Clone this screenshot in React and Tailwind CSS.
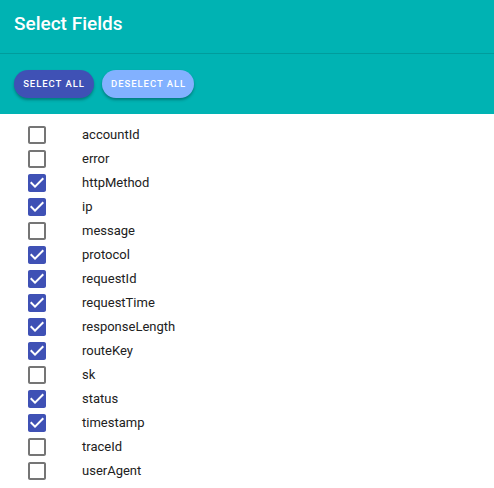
const fields = [
  { name: 'accountId', checked: false },
  { name: 'error', checked: false },
  { name: 'httpMethod', checked: true },
  { name: 'ip', checked: true },
  { name: 'message', checked: false },
  { name: 'protocol', checked: true },
  { name: 'requestId', checked: true },
  { name: 'requestTime', checked: true },
  { name: 'responseLength', checked: true },
  { name: 'routeKey', checked: true },
  { name: 'sk', checked: false },
  { name: 'status', checked: true },
  { name: 'timestamp', checked: true },
  { name: 'traceId', checked: false },
  { name: 'userAgent', checked: false },
];

const CheckIcon = ({ checked }) =>
  checked ? (
    <svg width="24" height="24" viewBox="0 0 24 24" className="text-[#3f51b5]">
      <path
        fill="currentColor"
        d="M19 3H5c-1.11 0-2 .9-2 2v14c0 1.1.89 2 2 2h14c1.11 0 2-.9 2-2V5c0-1.1-.89-2-2-2zm-9 14l-5-5 1.41-1.41L10 14.17l7.59-7.59L19 8l-9 9z"
      />
    </svg>
  ) : (
    <svg width="24" height="24" viewBox="0 0 24 24" className="text-[#757575]">
      <path
        fill="currentColor"
        d="M19 5v14H5V5h14m0-2H5c-1.1 0-2 .9-2 2v14c0 1.1.9 2 2 2h14c1.1 0 2-.9 2-2V5c0-1.1-.9-2-2-2z"
      />
    </svg>
  );

export default function App() {
  return (
    <div className="w-[494px] h-[488px] bg-white font-['Roboto',sans-serif] overflow-hidden">
      <div className="bg-[#00b3b3]">
        <div className="h-[54px] px-[14px] pt-[13px] border-b border-[#009c9c]">
          <h1 className="text-[19px] font-medium text-white leading-[22px]">Select Fields</h1>
        </div>
        <div className="h-[60px] px-[14px] pt-[16px] flex gap-2">
          <button className="h-[28px] px-[9px] rounded-full bg-[#3f51b5] text-white text-[9.5px] font-medium tracking-[0.1em] whitespace-nowrap shadow-[0_2px_3px_rgba(0,0,0,0.3)] w-[80px]">
            SELECT ALL
          </button>
          <button className="h-[28px] px-[9px] rounded-full bg-[#82b1ff] text-white text-[9.5px] font-medium tracking-[0.1em] whitespace-nowrap shadow-[0_2px_3px_rgba(0,0,0,0.3)] w-[92px]">
            DESELECT ALL
          </button>
        </div>
      </div>
      <ul className="pt-[9px]">
        {fields.map((f) => (
          <li key={f.name} className="h-[24px] flex items-center">
            <span className="ml-[25px] w-[24px] h-[24px] flex items-center justify-center">
              <CheckIcon checked={f.checked} />
            </span>
            <span className="ml-[33px] text-[13px] text-[#212121]">{f.name}</span>
          </li>
        ))}
      </ul>
    </div>
  );
}
